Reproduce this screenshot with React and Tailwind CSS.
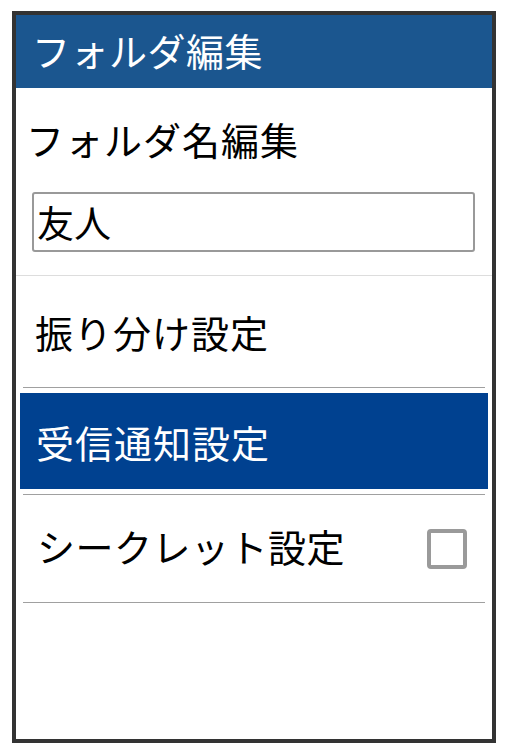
import React, { useState } from 'react'

const font = { fontFamily: '"Noto Sans CJK JP", "Noto Sans", sans-serif' }

const App = () => {
  const [name, setName] = useState('友人')
  const [secret, setSecret] = useState(false)

  return (
    <div className="w-[507px] h-[753px] bg-white pt-[11px] pl-[12px]" style={font}>
      <div className="w-[484px] h-[732px] border-4 border-[#333333] flex flex-col bg-white">
        {/* Header */}
        <div className="h-[73px] bg-[#1b568f] flex items-center pl-[16px]">
          <h1 className="text-[38px] leading-none text-white font-normal tracking-[0.5px] -mt-[4px]">フォルダ編集</h1>
        </div>

        {/* Folder name */}
        <div className="pt-[32px] pb-[23px] border-b border-[#dddddd]">
          <div className="pl-[10px] text-[38px] leading-[38px] text-black tracking-[1px]">フォルダ名編集</div>
          <div className="mt-[34px] ml-[16px] w-[443px]">
            <input
              value={name}
              onChange={(e) => setName(e.target.value)}
              className="w-full h-[60px] border-2 border-[#999999] rounded-[3px] px-[3px] text-[37px] text-black outline-none"
              style={font}
            />
          </div>
        </div>

        {/* Sort settings */}
        <div className="h-[111px] flex items-center pl-[19px] text-[38px] text-black tracking-[1px]">振り分け設定</div>
        <div className="mx-[7px] h-px bg-[#a0a0a0]"></div>

        {/* Notification settings (selected) */}
        <div className="py-[5px]">
          <div className="mx-[4px] h-[96px] bg-[#004190] flex items-center pl-[16px] text-[38px] text-white tracking-[1px]">受信通知設定</div>
        </div>
        <div className="mx-[7px] h-px bg-[#a0a0a0]"></div>

        {/* Secret settings */}
        <div
          className="h-[107px] flex items-center justify-between pl-[21px] pr-[25px] cursor-pointer"
          onClick={() => setSecret(!secret)}
        >
          <span className="text-[38px] text-black tracking-[0.5px] -mt-[6px]">シークレット設定</span>
          <span className="w-[40px] h-[40px] border-[4px] border-[#9a9a9a] rounded-[4px] bg-white flex items-center justify-center">
            {secret && <span className="w-[20px] h-[20px] bg-[#004190]"></span>}
          </span>
        </div>
        <div className="mx-[7px] h-px bg-[#a0a0a0]"></div>
      </div>
    </div>
  )
}

export default App
